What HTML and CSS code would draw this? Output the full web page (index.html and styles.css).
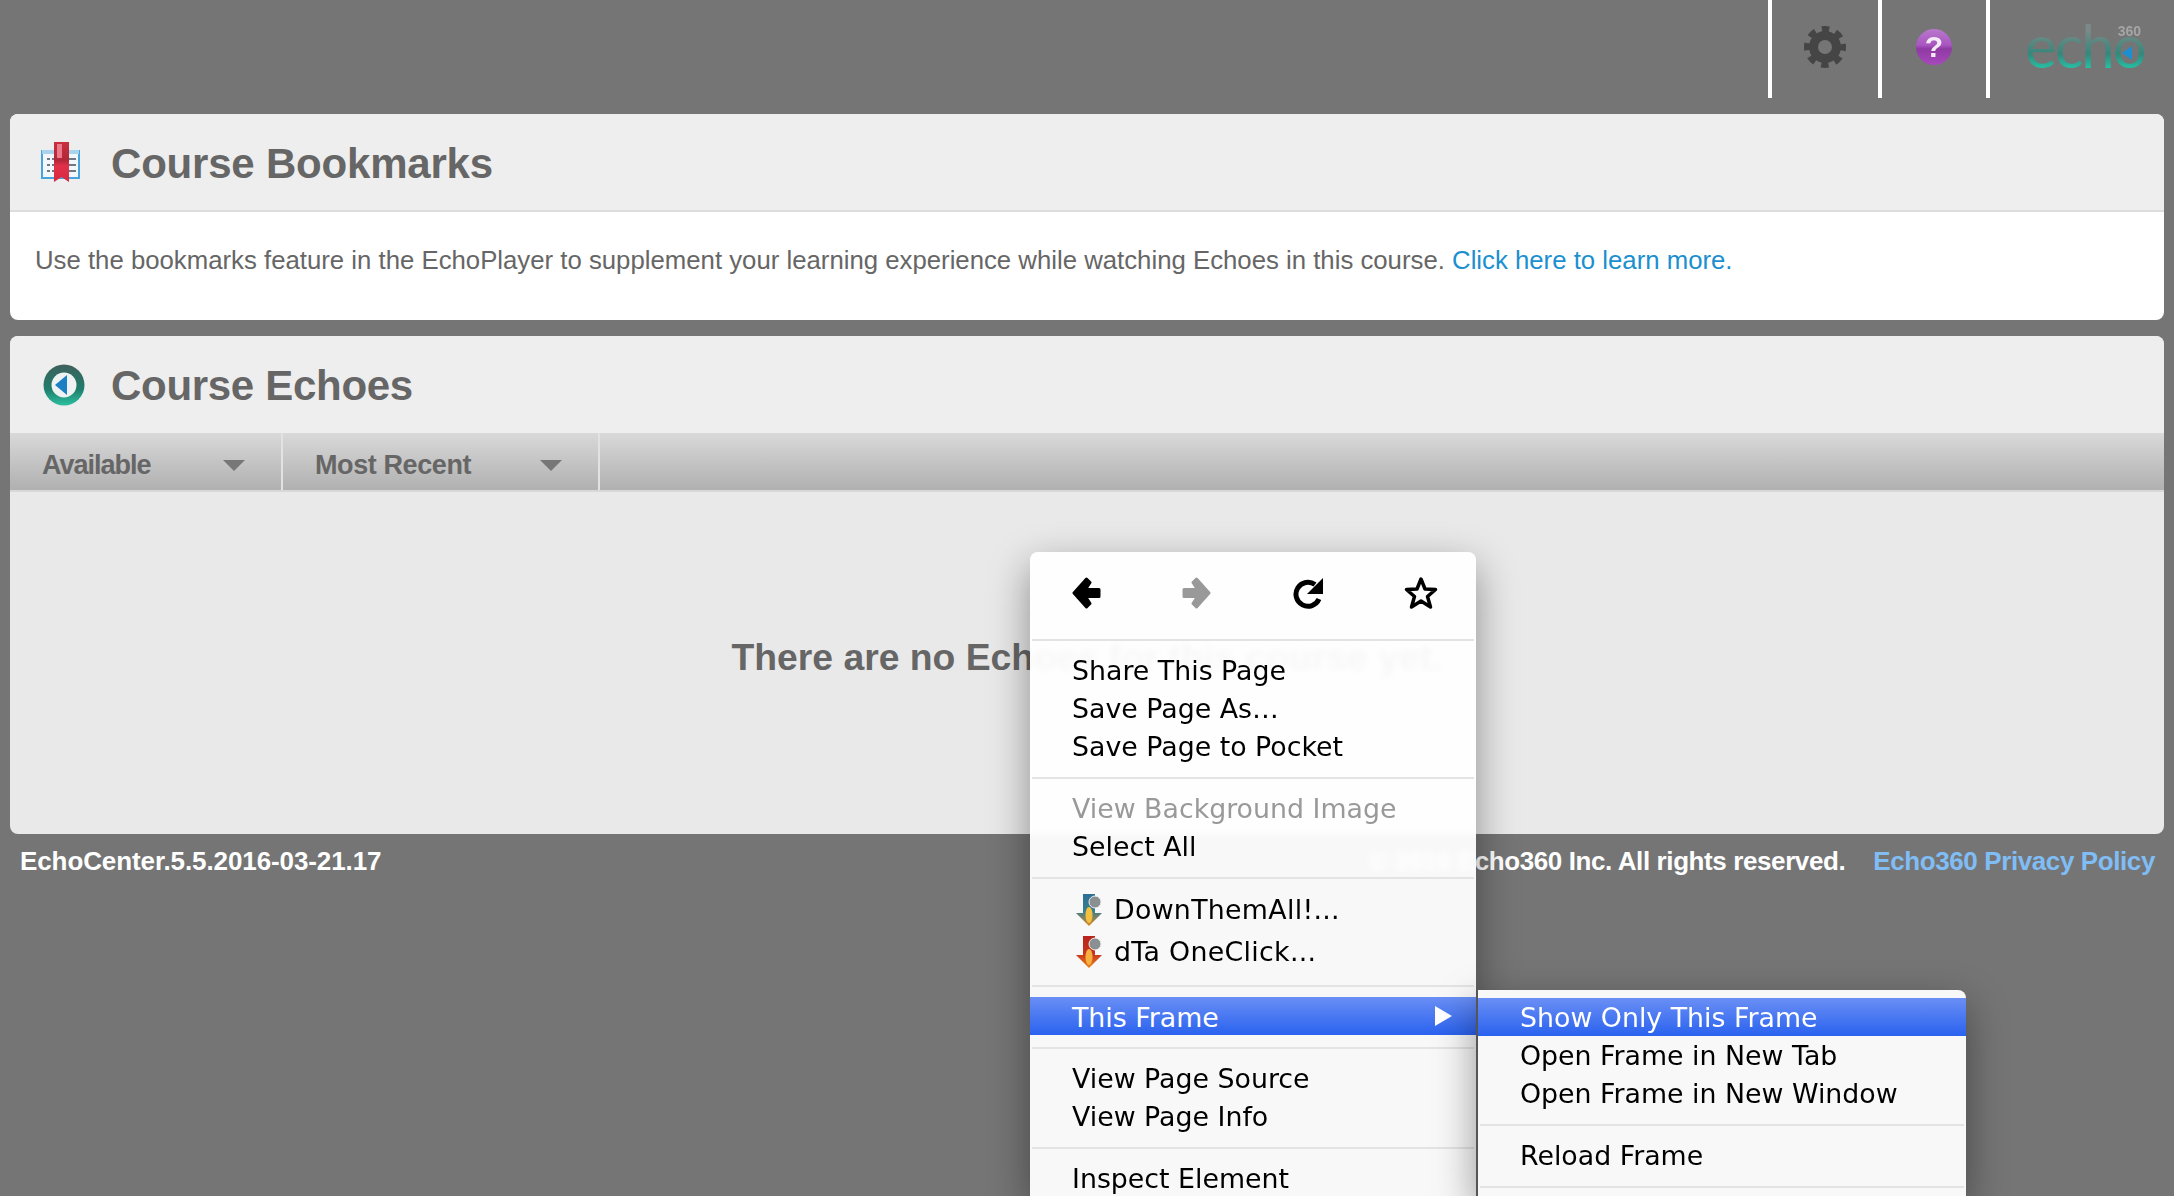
FILE: index.html
```html
<!DOCTYPE html>
<html lang="en">
<head>
  <meta charset="UTF-8">
  <title>Course Bookmarks</title>
  <link rel="stylesheet" href="styles.css">
</head>
<body>

  <div class="topbar">
    <div class="topcell cell-gear">
      <svg width="44" height="44" viewBox="0 0 44 44" class="soft">
        <circle cx="22" cy="22" r="17.5" fill="none" stroke="#454545" stroke-width="7" stroke-dasharray="7.2 6.54" stroke-dashoffset="3.6"/>
        <circle cx="22" cy="22" r="11.5" fill="none" stroke="#454545" stroke-width="9"/>
      </svg>
    </div>
    <div class="topcell cell-help">
      <div class="help-ball">?</div>
    </div>
    <div class="topcell cell-logo">
      <div class="logo">
        <span class="logo-word">echo</span>
        <span class="logo-360">360</span>
        <span class="logo-tri"></span>
      </div>
    </div>
  </div>

  <div class="panel">
    <div class="panel-head">
      <svg class="panel-icon" width="40" height="42" viewBox="0 0 40 42">
        <defs>
          <linearGradient id="ribbonGrad" x1="0" y1="0" x2="0" y2="1">
            <stop offset="0" stop-color="#c9303f"/>
            <stop offset="0.45" stop-color="#b22638"/>
            <stop offset="0.6" stop-color="#e2304a"/>
            <stop offset="1" stop-color="#d8283f"/>
          </linearGradient>
        </defs>
        <rect x="1" y="10" width="37" height="27" fill="#f3f7fa" stroke="#45a5dc" stroke-width="2"/>
        <rect x="1" y="9" width="37" height="4" fill="#a9d3ec"/>
        <g fill="#6d7a84">
          <rect x="6" y="17" width="3" height="2"/><rect x="11" y="17" width="2" height="2"/>
          <rect x="6" y="23" width="3" height="2"/><rect x="11" y="23" width="2" height="2"/>
          <rect x="6" y="29" width="3" height="2"/><rect x="11" y="29" width="2" height="2"/>
          <rect x="28" y="17" width="7" height="2"/><rect x="28" y="23" width="7" height="2"/><rect x="28" y="29" width="7" height="2"/>
        </g>
        <path d="M13 1 H28 V41 L20.500 36 L13 41 Z" fill="url(#ribbonGrad)"/>
        <rect x="16" y="3" width="5" height="14" fill="#ea7a8a"/>
      </svg>
      <h2>Course Bookmarks</h2>
    </div>
    <div class="panel-body">
      Use the bookmarks feature in the EchoPlayer to supplement your learning experience while watching Echoes in this course. <a href="#">Click here to learn more.</a>
    </div>
  </div>

  <div class="panel panel-echoes">
    <div class="panel-head head-echoes">
      <svg class="echo-icon" width="42" height="44" viewBox="0 0 42 44">
        <defs>
          <linearGradient id="ringGrad" x1="0" y1="0" x2="0" y2="1">
            <stop offset="0" stop-color="#3e5f5c"/>
            <stop offset="0.6" stop-color="#1f7d6b"/>
            <stop offset="1" stop-color="#2cc0a0"/>
          </linearGradient>
        </defs>
        <circle cx="21" cy="22" r="20.500" fill="url(#ringGrad)"/>
        <circle cx="21" cy="22" r="12.500" fill="#eef2f2"/>
        <path d="M12 22 L24 12 V32 Z" fill="#1b7fc4"/>
      </svg>
      <h2>Course Echoes</h2>
    </div>
    <div class="toolbar">
      <div class="filter filter-first">
        <span>Available</span>
        <i class="caret"></i>
      </div>
      <div class="filter filter-second">
        <span>Most Recent</span>
        <i class="caret"></i>
      </div>
    </div>
    <div class="empty">There are no Echoes for this course yet.</div>
  </div>

  <div class="footer">
    <span class="version">EchoCenter.5.5.2016-03-21.17</span>
    <div class="footer-right">
      <span>© 2016 Echo360 Inc. All rights reserved.</span>
      <a href="#">Echo360 Privacy Policy</a>
    </div>
  </div>

  <!-- context menu -->
  <div class="menu">
    <div class="nav-row">
      <svg width="30" height="34" viewBox="0 0 30 34"><path d="M2 17 L14.500 3 L18 6.500 L13.500 13.500 H27 V20.500 H13.500 L18 27.500 L14.500 31 Z" fill="#000" stroke="#000" stroke-width="3" stroke-linejoin="round"/></svg>
      <svg width="30" height="34" viewBox="0 0 30 34"><path d="M28 17 L15.500 3 L12 6.500 L16.500 13.500 H3 V20.500 H16.500 L12 27.500 L15.500 31 Z" fill="#999" stroke="#999" stroke-width="3" stroke-linejoin="round"/></svg>
      <svg class="nav-reload" width="32" height="34" viewBox="0 0 32 34"><path d="M26 23 A12 12 0 1 1 22 8.500" fill="none" stroke="#000" stroke-width="5"/><path d="M30 2 V18 H14 Z" fill="#000"/></svg>
      <svg width="34" height="34" viewBox="0 0 34 34"><path d="M17 3 L21 13 L31.500 13.500 L23.500 20.500 L26.500 31 L17 25 L7.500 31 L10.500 20.500 L2.500 13.500 L13 13 Z" fill="none" stroke="#000" stroke-width="3.500" stroke-linejoin="round"/></svg>
    </div>
    <div class="sep sep-first"></div>
    <div class="item">Share This Page</div>
    <div class="item">Save Page As…</div>
    <div class="item">Save Page to Pocket</div>
    <div class="sep"></div>
    <div class="item disabled">View Background Image</div>
    <div class="item">Select All</div>
    <div class="sep"></div>
    <div class="item item-icon">
      <svg width="28" height="34" viewBox="0 0 28 34">
        <defs>
          <linearGradient id="dtaBlue" x1="0" y1="0" x2="0" y2="1">
            <stop offset="0" stop-color="#2d6f96"/><stop offset="0.55" stop-color="#3a7f8c"/><stop offset="1" stop-color="#e08a20"/>
          </linearGradient>
          <linearGradient id="dtaRed" x1="0" y1="0" x2="0" y2="1">
            <stop offset="0" stop-color="#b8241c"/><stop offset="0.55" stop-color="#c8321c"/><stop offset="1" stop-color="#e8851c"/>
          </linearGradient>
        </defs>
        <path d="M8 1 H20 V20 H27 L14 33 L1 20 H8 Z" fill="url(#dtaBlue)"/>
        <ellipse cx="14" cy="22" rx="3.500" ry="8" fill="#f5c040"/>
        <circle cx="20" cy="9" r="6" fill="#8a8f92" stroke="#eee"/>
      </svg>
      <span>DownThemAll!...</span>
    </div>
    <div class="item item-icon">
      <svg width="28" height="34" viewBox="0 0 28 34">
        <path d="M8 1 H20 V20 H27 L14 33 L1 20 H8 Z" fill="url(#dtaRed)"/>
        <ellipse cx="14" cy="22" rx="3.500" ry="8" fill="#f5b040"/>
        <circle cx="20" cy="9" r="6" fill="#8a8f92" stroke="#eee"/>
      </svg>
      <span>dTa OneClick...</span>
    </div>
    <div class="sep"></div>
    <div class="item active has-sub">This Frame<i class="sub-arrow"></i></div>
    <div class="sep"></div>
    <div class="item">View Page Source</div>
    <div class="item">View Page Info</div>
    <div class="sep"></div>
    <div class="item">Inspect Element</div>
  </div>

  <div class="menu submenu">
    <div class="item active">Show Only This Frame</div>
    <div class="item">Open Frame in New Tab</div>
    <div class="item">Open Frame in New Window</div>
    <div class="sep"></div>
    <div class="item">Reload Frame</div>
    <div class="sep"></div>
  </div>

</body>
</html>
```

FILE: styles.css
```css
html, body {
  height: 1196px;
  overflow: hidden;
}
body {
  margin: 0;
  background: #757575;
  font-family: "Liberation Sans", Arial, sans-serif;
  position: relative;
}

/* top bar */
.topbar {
  display: flex;
  justify-content: flex-end;
  height: 98px;
}
.topcell {
  border-left: 4px solid #fff;
  display: flex;
  align-items: center;
  justify-content: center;
  box-sizing: border-box;
}
.cell-gear { width: 110px; padding-bottom: 4px; }
.cell-help { width: 108px; padding-bottom: 4px; }
.cell-logo { width: 188px; padding: 0 29px 8px 35px; }
.soft { filter: blur(0.6px); }
.help-ball {
  width: 36px;
  height: 36px;
  border-radius: 50%;
  background: linear-gradient(#b878cc 0%, #a955c0 45%, #8f3aa3 55%, #a848bc 100%);
  color: #f4eaf6;
  font-size: 30px;
  font-weight: bold;
  line-height: 36px;
  text-align: center;
  filter: blur(0.4px);
}
.logo {
  position: relative;
  width: 120px;
  height: 60px;
  filter: blur(0.5px);
}
.logo-word {
  display: block;
  font-family: "Lato", sans-serif;
  font-weight: 400;
  font-size: 60px;
  line-height: 60px;
  letter-spacing: -2px;
  white-space: nowrap;
  background: linear-gradient(#7b8a88 25%, #35877b 65%, #25c4a8 90%);
  -webkit-background-clip: text;
  background-clip: text;
  color: transparent;
}
.logo-360 {
  position: absolute;
  right: 4px;
  top: 10px;
  font-size: 14px;
  line-height: 13px;
  font-weight: bold;
  color: #a5a5a5;
}
.logo-tri {
  position: absolute;
  right: 13px;
  top: 31px;
  border-top: 7px solid transparent;
  border-bottom: 7px solid transparent;
  border-right: 10px solid #1b8fd0;
}

/* panels */
.panel {
  margin: 16px 10px 0;
  border-radius: 8px;
  overflow: hidden;
  background: #fff;
}
.panel-head {
  height: 96px;
  background: #eee;
  border-bottom: 2px solid #ddd;
  display: flex;
  align-items: center;
  padding-left: 31px;
}
.panel-icon {
  flex-shrink: 0;
}
.echo-icon {
  flex-shrink: 0;
  margin-left: 2px;
  margin-right: -4px;
}
.panel-head h2 {
  margin: 3px 0 0 30px;
  font-size: 42px;
  font-weight: bold;
  color: #666;
  letter-spacing: -0.2px;
}
.panel-body {
  height: 108px;
  box-sizing: border-box;
  padding: 32px 25px 0;
  font-size: 25.750px;
  line-height: 32px;
  color: #666;
}
.panel-body a {
  color: #1b8fd0;
  text-decoration: none;
}

.panel-echoes {
  background: #e9e9e9;
}
.head-echoes {
  height: 97px;
  border-bottom: 0;
}
.head-echoes h2 {
  margin-top: 3px;
  letter-spacing: -0.3px;
}
.toolbar {
  height: 57px;
  display: flex;
  background: linear-gradient(#d9d9d9, #b0b0b0);
  border-bottom: 2px solid #d8d8d8;
}
.filter {
  display: flex;
  align-items: center;
  justify-content: space-between;
  box-sizing: border-box;
  padding-top: 7px;
  border-right: 2px solid #e2e2e2;
  font-size: 27px;
  font-weight: bold;
  color: #666;
  letter-spacing: -0.4px;
}
.filter-first { width: 273px; padding-left: 32px; padding-right: 36px; letter-spacing: -1px; }
.filter-second { width: 317px; padding-left: 32px; padding-right: 36px; }
.caret {
  width: 0;
  height: 0;
  border-left: 11px solid transparent;
  border-right: 11px solid transparent;
  border-top: 11px solid #777;
}
.empty {
  height: 342px;
  box-sizing: border-box;
  padding-top: 143px;
  text-align: center;
  font-size: 37.300px;
  line-height: 44px;
  font-weight: bold;
  color: #666;
}

/* footer */
.footer {
  display: flex;
  justify-content: space-between;
  margin-top: 10px;
  padding: 0 19px 0 20px;
  font-size: 26px;
  line-height: 34px;
  font-weight: bold;
  color: #fff;
  letter-spacing: -0.4px;
}
.version {
  letter-spacing: -0.1px;
}
.footer-right {
  display: flex;
  gap: 28px;
}
.footer a {
  color: #80bdf5;
  text-decoration: none;
}

/* context menu */
.menu {
  position: absolute;
  left: 1030px;
  top: 552px;
  width: 446px;
  box-sizing: border-box;
  background: rgba(255, 255, 255, 0.95);
  backdrop-filter: blur(3px);
  border-radius: 8px 8px 0 0;
  box-shadow: 0 14px 40px rgba(0, 0, 0, 0.4);
  font-family: "DejaVu Sans", sans-serif;
  font-size: 26.800px;
  color: #000;
}
.submenu {
  left: 1476px;
  top: 990px;
  width: 490px;
  padding-top: 8px;
  background: #f8f8f8;
  border-left: 2px solid #555;
  border-radius: 0 8px 0 0;
}
.nav-row {
  height: 87px;
  display: flex;
  align-items: center;
  justify-content: space-between;
  padding: 0 38px 6px 42px;
  box-sizing: border-box;
}
.nav-reload {
  margin-left: 2px;
}
.sep {
  height: 2px;
  margin: 12px 2px 10px;
  background: #e3e3e3;
}
.sep-first { margin-top: 0; }
.item {
  height: 38px;
  line-height: 40px;
  padding-left: 42px;
  white-space: nowrap;
  position: relative;
}
.item-icon {
  height: 42px;
  line-height: 46px;
  display: flex;
  align-items: center;
  gap: 11px;
  padding-left: 45px;
  letter-spacing: 0.3px;
}
.has-sub {
  line-height: 41px;
}
.disabled { color: #999; }
.active {
  color: #fff;
  background: linear-gradient(#6a8ff5, #2a62ef);
}
.sub-arrow {
  position: absolute;
  right: 24px;
  top: 9px;
  border-top: 10px solid transparent;
  border-bottom: 10px solid transparent;
  border-left: 17px solid #fff;
}
```
